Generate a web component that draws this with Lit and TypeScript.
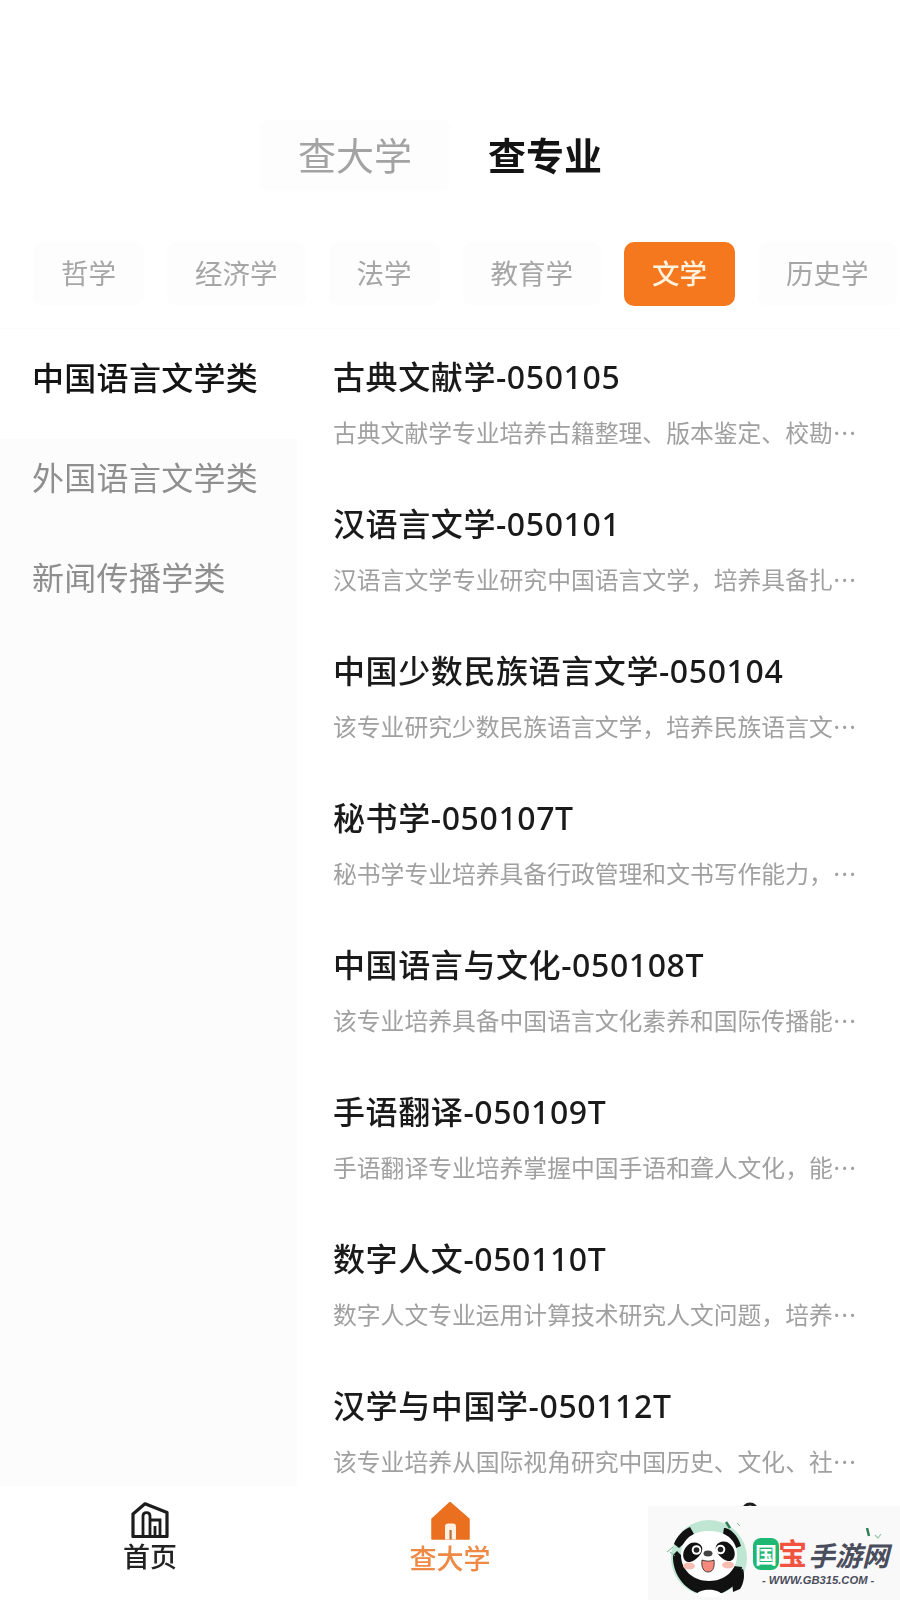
import { LitElement, html, css, svg } from "lit";
import { customElement, state } from "lit/decorators.js";

const chips = ["哲学", "经济学", "法学", "教育学", "文学", "历史学"];
const groups = ["中国语言文学类", "外国语言文学类", "新闻传播学类"];
const majors = [
  ["古典文献学-050105", "古典文献学专业培养古籍整理、版本鉴定、校勘等方面的专门人才。"],
  ["汉语言文学-050101", "汉语言文学专业研究中国语言文学，培养具备扎实语言功底的人才。"],
  ["中国少数民族语言文学-050104", "该专业研究少数民族语言文学，培养民族语言文化方面的专门人才。"],
  ["秘书学-050107T", "秘书学专业培养具备行政管理和文书写作能力，能从事秘书工作的人才。"],
  ["中国语言与文化-050108T", "该专业培养具备中国语言文化素养和国际传播能力的复合型人才。"],
  ["手语翻译-050109T", "手语翻译专业培养掌握中国手语和聋人文化，能从事手语翻译的人才。"],
  ["数字人文-050110T", "数字人文专业运用计算技术研究人文问题，培养跨学科的复合型人才。"],
  ["汉学与中国学-050112T", "该专业培养从国际视角研究中国历史、文化、社会等方面的专门人才。"],
];

const homeIcon = svg`
  <path d="M2 34.500V12L14 1.800 36 10.500V34.500z" fill="none" stroke="#1c1c1c" stroke-width="3.200" stroke-linejoin="round"/>
  <path d="M12 34V14c0-4.500 7-4.500 7 0v20" fill="none" stroke="#1c1c1c" stroke-width="2.800"/>
  <path d="M19 18H29V34M24 34V24" fill="none" stroke="#1c1c1c" stroke-width="2.800"/>`;

const schoolIcon = svg`
  <path d="M1 17L19 .5 38 17V37H1z" fill="#ea6f1e" stroke="#ea6f1e" stroke-width="1.500" stroke-linejoin="round"/>
  <path d="M14 37.500V25c0-3 1-3.500 3-3.500h5c2 0 3 .5 3 3.500v12.500z" fill="#fff0e2"/>
  <rect x="18.500" y="28" width="2.200" height="9.500" fill="#b8703c"/>`;

const panda = svg`
  <circle cx="44" cy="43" r="38" fill="#bfe6d3"/>
  <path d="M9 29C12 21 18 15 25 12L29 19 14 33zM59 13C65 13 73 20 76 31L71 33 58 19z" fill="#111"/>
  <path d="M8 40C7 60 22 80 44 80c19 0 31-12 33-28L60 50 26 50 12 36z" fill="#111"/>
  <path d="M44 16C26 16 16 26 16 40c0 15 12 26 28 26s28-11 28-26C72 26 62 16 44 16z" fill="#fff"/>
  <path d="M23 30c4-4 12-3 14 2 2 6-7 15-13 15-7 0-8-11-1-17zM65 29c-4-4-12-3-14 2-2 6 7 15 13 15 7 0 8-11 1-17z" fill="#111"/>
  <circle cx="31.500" cy="35" r="4.800" fill="#fff"/><circle cx="31.500" cy="35" r="2.800" fill="#222"/>
  <circle cx="55.500" cy="34.500" r="4.800" fill="#fff"/><circle cx="55.500" cy="34.500" r="2.800" fill="#222"/>
  <ellipse cx="43" cy="38.500" rx="4.500" ry="3" fill="#444"/>
  <path d="M37 45c4 1.500 9 1.500 12 0 1 9-2 12-6 12s-7-4-6-12z" fill="#f4897c" stroke="#222" stroke-width=".8"/>
  <ellipse cx="24" cy="51" rx="6" ry="3.500" fill="#f8bdb2"/><ellipse cx="63" cy="50" rx="6" ry="3.500" fill="#f8bdb2"/>
  <path d="M30 80c6-7 22-7 28 0-8 3-20 3-28 0z" fill="#fff"/>
  <path d="M64 62c2-6 7-8 10-7l4-1c2 6 1 14-3 20l-7 3c0-6-2-11-4-15z" fill="#111"/>
  <path d="M8 32l-6 5M5 37l5 4" stroke="#6fb58c" stroke-width="1" fill="none"/>
  <path d="M61 7l4 6" stroke="#2f7d55" stroke-width="2.500" fill="none"/>
  <path d="M72 8l3 3" stroke="#7dbb96" stroke-width="1" fill="none"/>`;

@customElement("app-root")
export class AppRoot extends LitElement {
  @state() chip = 4;
  @state() group = 0;

  static styles = css`
    :host {
      display: block;
      position: relative;
      width: 900px;
      height: 1600px;
      overflow: hidden;
      background: #fff;
      font-family: "Noto Sans CJK SC", "Noto Sans", sans-serif;
    }
    .soft {
      filter: blur(0.6px);
    }
    .tabs {
      display: flex;
      justify-content: center;
      padding-top: 120px;
    }
    .tab {
      width: 190px;
      height: 70px;
      line-height: 68px;
      text-align: center;
      font-size: 38px;
      color: #a3a3a3;
      background: #fdfdfd;
      border-radius: 8px;
    }
    .tab.on {
      color: #141414;
      font-weight: 700;
      background: transparent;
    }
    .chips {
      display: flex;
      gap: 23px;
      padding: 52px 0 22px 33px;
      border-bottom: 1px solid #fbfbfb;
    }
    .chip {
      height: 64px;
      line-height: 60px;
      padding: 0 28px;
      font-size: 27.5px;
      color: #a6a6a6;
      background: #fdfdfd;
      border-radius: 10px;
      white-space: nowrap;
    }
    .chip.on {
      color: #fff3e0;
      font-weight: 500;
      background: #f5781f;
    }
    .body {
      display: flex;
      height: 1157px;
      overflow: hidden;
    }
    .side {
      width: 297px;
      flex: none;
      background: #fcfcfd;
    }
    .group {
      height: 100px;
      line-height: 94px;
      padding-left: 32px;
      font-size: 32px;
      letter-spacing: 0.3px;
      color: #8f8f8f;
    }
    .group.on {
      color: #141414;
      font-weight: 500;
      background: #fff;
      box-shadow: 0 10px 0 #fff;
    }
    .list {
      flex: 1;
      min-width: 0;
      padding-left: 36px;
    }
    .major {
      height: 147px;
      padding-top: 28px;
      box-sizing: border-box;
    }
    .title {
      height: 44px;
      line-height: 40px;
      font-family: "Noto Sans", "Noto Sans CJK SC", sans-serif;
      font-size: 32px;
      letter-spacing: 0.6px;
      font-weight: 500;
      color: #1a1a1a;
    }
    .desc {
      width: 526px;
      height: 36px;
      margin-top: 15px;
      line-height: 32px;
      font-size: 23.8px;
      color: #a0a0a0;
      white-space: nowrap;
      overflow: hidden;
      text-overflow: ellipsis;
    }
    .nav {
      display: grid;
      grid-template-columns: repeat(3, 300px);
      height: 115px;
    }
    .tabitem {
      display: flex;
      flex-direction: column;
      align-items: center;
      padding-top: 16px;
      font-size: 27px;
      line-height: 32px;
      font-weight: 500;
      color: #222;
    }
    .tabitem svg {
      display: block;
      margin-bottom: 2px;
    }
    .tabitem.on {
      color: #ee8a45;
    }
    .mark {
      position: absolute;
      left: 648px;
      top: 1506px;
      width: 252px;
      height: 94px;
      background: #f9f9fa;
    }
    .panda {
      position: absolute;
      left: 17px;
      top: 9px;
    }
    .guo {
      position: absolute;
      left: 105px;
      top: 32px;
      width: 26px;
      height: 32px;
      line-height: 30px;
      text-align: center;
      border-radius: 8px;
      background: #1fb873;
      color: #fff;
      font-size: 22px;
      font-weight: 700;
    }
    .bao {
      position: absolute;
      left: 130px;
      top: 27px;
      font-size: 29px;
      line-height: 38px;
      font-weight: 700;
      color: #f0533f;
    }
    .shou {
      position: absolute;
      left: 160px;
      top: 32px;
      font-size: 27px;
      line-height: 34px;
      font-weight: 700;
      font-style: italic;
      color: #4a4d5c;
      white-space: nowrap;
    }
    .url {
      position: absolute;
      left: 114px;
      top: 65px;
      font-family: "Liberation Sans", sans-serif;
      font-size: 11.2px;
      line-height: 18px;
      font-weight: 700;
      font-style: italic;
      color: #4a4d5c;
      white-space: nowrap;
    }
    .sprig {
      position: absolute;
      left: 216px;
      top: 22px;
    }
  `;

  render() {
    return html`
      <div class="tabs soft">
        <div class="tab">查大学</div>
        <div class="tab on">查专业</div>
      </div>
      <div class="chips soft">
        ${chips.map((c, i) => html`<div class="chip ${i === this.chip ? "on" : ""}">${c}</div>`)}
      </div>
      <div class="body">
        <div class="side">
          ${groups.map((g, i) => html`<div class="group soft ${i === this.group ? "on" : ""}">${g}</div>`)}
        </div>
        <div class="list soft">
          ${majors.map(([t, d]) => html`
            <div class="major">
              <div class="title">${t}</div>
              <div class="desc">${d}</div>
            </div>
          `)}
        </div>
      </div>
      <div class="nav soft">
        <div class="tabitem">
          <svg width="38" height="36" viewBox="0 0 38 36">${homeIcon}</svg>
          首页
        </div>
        <div class="tabitem on">
          <svg width="39" height="38" viewBox="0 0 39 38">${schoolIcon}</svg>
          查大学
        </div>
        <div class="tabitem">
          <svg width="38" height="36" viewBox="0 0 38 36">
            <circle cx="19" cy="9" r="7" fill="none" stroke="#1c1c1c" stroke-width="3"/>
          </svg>
        </div>
      </div>
      <div class="mark">
        <svg class="panda" width="90" height="85" viewBox="0 0 90 85">${panda}</svg>
        <div class="guo">国</div>
        <div class="bao">宝</div>
        <div class="shou">手游网</div>
        <div class="url">- WWW.GB315.COM -</div>
        <svg class="sprig" width="20" height="14" viewBox="0 0 20 14">
          <path d="M3 0l2 8" stroke="#2f7d55" stroke-width="2.500" fill="none"/>
          <path d="M11 7l3 3 3-4" stroke="#9cc7ac" stroke-width="1.200" fill="none"/>
        </svg>
      </div>
    `;
  }
}
